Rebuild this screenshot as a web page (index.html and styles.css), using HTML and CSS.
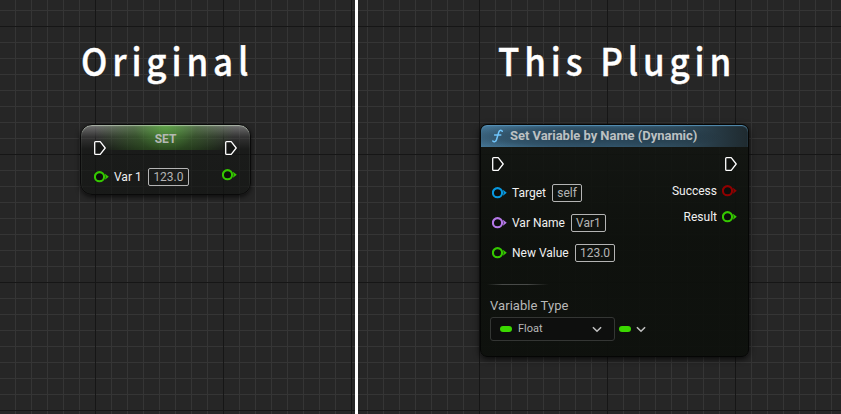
FILE: index.html
```
<!DOCTYPE html>
<html lang="en">
<head>
<meta charset="utf-8">
<title>Set Variable by Name</title>
<link rel="stylesheet" href="styles.css">
</head>
<body>
<svg class="defs" width="0" height="0" aria-hidden="true">
  <symbol id="exec" viewBox="0 0 12 14"><path d="M1.6.7H6.2L11.2 7 6.2 13.3H1.6Q.7 13.3.7 12.4V1.6Q.7.7 1.6.7Z" fill="#0b0d0b" fill-opacity=".5" stroke="#fff" stroke-width="1.3" stroke-linejoin="round"/></symbol>
  <symbol id="pin" viewBox="0 0 15 12"><circle cx="5.5" cy="5.7" r="4.6" fill="#0c0e0c" stroke="currentColor" stroke-width="2.1"/><path d="M11 2.7 14.8 5.7 11 8.7Q12 5.7 11 2.7Z" fill="currentColor"/></symbol>
  <symbol id="chevron" viewBox="0 0 10 7"><path d="M.9 1.2 5 5.2 9.1 1.2" fill="none" stroke="#c0c0c0" stroke-width="1.6"/></symbol>
</svg>
<main class="graph">
  <section class="pane">
    <h1 class="heading heading-original">Original</h1>
    <article class="node node-set">
      <header class="set-title">SET</header>
      <div class="set-row">
        <svg class="exec"><use href="#exec"/></svg>
        <svg class="exec"><use href="#exec"/></svg>
      </div>
      <div class="set-row set-values">
        <div class="field"><svg class="pin green"><use href="#pin"/></svg><span class="label">Var 1</span><span class="value">123.0</span></div>
        <svg class="pin green out"><use href="#pin"/></svg>
      </div>
    </article>
  </section>
  <div class="divider"></div>
  <section class="pane">
    <h1 class="heading heading-plugin">This Plugin</h1>
    <article class="node node-dynamic">
      <header class="dynamic-title">
        <svg class="fn" viewBox="0 0 11 14"><path d="M10.2 2.3C9.7.6 7.5.7 6.8 3L4.5 10.8C4 12.6 2 13.4.8 12.1M2.6 5.9H8.8" fill="none" stroke="#6fc4fa" stroke-width="1.5" stroke-linecap="round"/></svg>
        <span>Set Variable by Name (Dynamic)</span>
      </header>
      <div class="pins">
        <div class="inputs">
          <svg class="exec"><use href="#exec"/></svg>
          <div class="field"><svg class="pin blue"><use href="#pin"/></svg><span class="label">Target</span><span class="value">self</span></div>
          <div class="field"><svg class="pin violet"><use href="#pin"/></svg><span class="label">Var Name</span><span class="value">Var1</span></div>
          <div class="field"><svg class="pin green"><use href="#pin"/></svg><span class="label">New Value</span><span class="value">123.0</span></div>
        </div>
        <div class="outputs">
          <svg class="exec"><use href="#exec"/></svg>
          <div class="result"><span>Success</span><svg class="pin red"><use href="#pin"/></svg></div>
          <div class="result"><span>Result</span><svg class="pin green"><use href="#pin"/></svg></div>
        </div>
      </div>
      <div class="rule"></div>
      <div class="type-label">Variable Type</div>
      <div class="type-row">
        <div class="combo"><i class="pill"></i><span>Float</span><svg class="chevron"><use href="#chevron"/></svg></div>
        <i class="pill"></i><svg class="chevron"><use href="#chevron"/></svg>
      </div>
    </article>
  </section>
</main>
</body>
</html>
```
FILE: styles.css
```
* { box-sizing: border-box; }
body { margin: 0; overflow: hidden; font-family: Roboto, sans-serif; background: #262626; }
svg { display: block; flex: none; }
.defs { position: absolute; }
.graph {
  display: grid;
  grid-template-columns: 355px 3px 1fr;
  width: 841px;
  height: 414px;
  background:
    linear-gradient(90deg, #161616 1px, transparent 1px) 95px 0 / 128px 128px,
    linear-gradient(#161616 1px, transparent 1px) 0 26px / 128px 128px,
    linear-gradient(90deg, #353535 1px, transparent 1px) 15px 0 / 16px 16px,
    linear-gradient(#353535 1px, transparent 1px) 0 10px / 16px 16px,
    #262626;
}
.divider { background: #fff; }
.pane { position: relative; }
.heading {
  width: max-content;
  margin: 32px 0 0;
  font: 500 38px/56px "Noto Sans CJK SC", sans-serif;
  letter-spacing: 5.3px;
  color: #fff;
  -webkit-text-stroke: .4px #fff;
  white-space: nowrap;
  transform: scaleX(.92);
  transform-origin: 0 0;
}
.heading-original { margin-left: 80.5px; }
.heading-plugin { margin-left: 139.5px; }

.node { position: absolute; font-size: 12px; color: #f0f0f0; }
.exec { width: 12px; height: 14px; }
.pin { width: 15px; height: 12px; }
.green { color: #35c800; }
.blue { color: #0898e0; }
.violet { color: #b578e8; }
.red { color: #900000; }
.field { display: flex; align-items: center; height: 18px; }
.label { margin-left: 5px; }
.value {
  height: 18px;
  margin-left: 6px;
  padding: 0 4.2px;
  border: 1px solid #b4b4b4;
  border-radius: 2px;
  line-height: 16px;
  color: #b4b4b4;
}

.node-set {
  left: 80px;
  top: 124px;
  width: 171px;
  height: 71px;
  padding: 0 13px;
  border: 1px solid #0a0a0a;
  border-radius: 12px;
  background:
    radial-gradient(ellipse 70px 60px at 50% 0, rgba(88, 180, 58, .75), rgba(60, 125, 35, .4) 45%, transparent) 0 0 / 100% 25px no-repeat,
    linear-gradient(rgba(140, 140, 140, .75), rgba(70, 70, 70, .4) 12px, rgba(18, 20, 18, .6) 24px, rgba(18, 20, 18, .68));
  box-shadow: 0 2px 5px rgba(0, 0, 0, .65), inset 0 1px 1px rgba(210, 225, 205, .6);
}
.set-title { height: 16px; padding-top: 6px; line-height: 16px; text-align: center; font-weight: 700; color: #b5b8b3; }
.set-row { display: flex; justify-content: space-between; }
.set-values { margin-top: 13px; }
.set-values .label { margin-right: .5px; }
.set-values .out { margin-top: .5px; }

.node-dynamic {
  left: 122px;
  top: 124px;
  width: 269px;
  height: 233px;
  border: 1px solid #050605;
  border-radius: 7px;
  background: linear-gradient(rgba(17, 20, 16, .86), rgba(13, 16, 12, .94) 50%);
  box-shadow: 0 2px 6px rgba(0, 0, 0, .75);
}
.dynamic-title {
  display: flex;
  align-items: center;
  gap: 7px;
  height: 22px;
  padding: 0 0 2px 11px;
  border-radius: 6px 6px 0 0;
  font-size: 13px;
  font-weight: 700;
  letter-spacing: -.04px;
  color: #bcc0c2;
  background: radial-gradient(ellipse 140px 15px at 38% 55%, rgba(22, 36, 46, .65), rgba(22, 36, 46, .4) 60%, transparent), linear-gradient(90deg, #47799a, #3f6c89 50%, #1f2a2f);
  box-shadow: inset 0 1px 1px #5590b5;
}
.fn { width: 11px; height: 14px; margin-top: 2px; }
.pins { display: flex; justify-content: space-between; padding: 10px 11px 0 11px; }
.inputs .field { margin-top: 12px; }
.inputs .exec + .field { margin-top: 13px; }
.outputs { display: flex; flex-direction: column; align-items: flex-end; }
.result { display: flex; align-items: center; gap: 5px; height: 14px; margin-top: 12px; }
.outputs .exec + .result { margin-top: 13px; }
.rule { width: 62px; height: 1px; margin: 22px 0 0 6px; background: linear-gradient(90deg, transparent, #484a48 25%, #484a48 65%, transparent); }
.type-label { margin: 12px 0 0 9px; font-size: 13px; line-height: 18px; letter-spacing: .06px; color: #b8b8b8; }
.type-row { display: flex; align-items: center; margin: 2px 0 0 9px; }
.combo { display: flex; align-items: center; width: 125px; height: 24px; margin-right: 4px; padding: 0 12px 0 9px; border: 1px solid #343634; border-radius: 3px; background: #0e0f0e; font-size: 11px; color: #b8b8b8; }
.combo span { margin: -2px 0 0 6px; }
.pill { width: 12px; height: 6px; border-radius: 3px; background: #3bd800; }
.chevron { width: 10px; height: 7px; margin-left: 5px; }
.combo .chevron { margin-left: auto; }
```
